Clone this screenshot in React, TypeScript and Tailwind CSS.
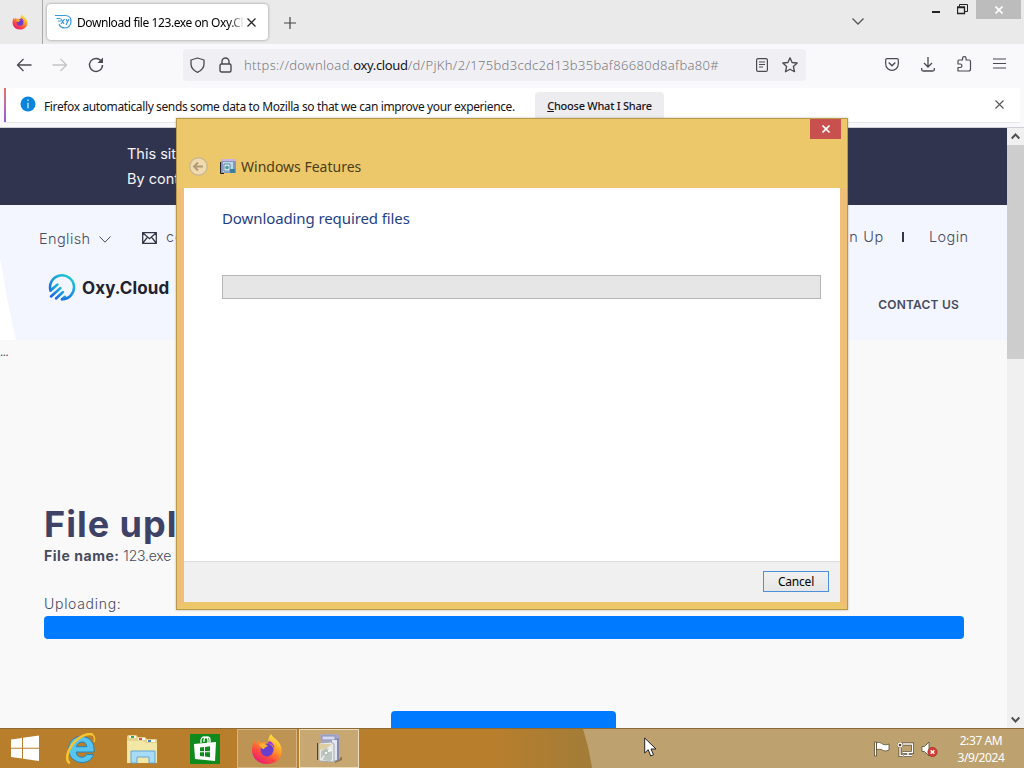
import React from "react";

const FirefoxIcon = ({ size, id }: { size: number; id: string }) => (
  <svg width={size} height={size} viewBox="0 0 32 32" className="shrink-0">
    <defs>
      <linearGradient id={id} x1="0.85" y1="0.05" x2="0.25" y2="1">
        <stop offset="0" stopColor="#fff04a" />
        <stop offset="0.4" stopColor="#ff9a28" />
        <stop offset="0.7" stopColor="#ff4a3f" />
        <stop offset="1" stopColor="#e5197d" />
      </linearGradient>
    </defs>
    <path d="M20 1c1 3 6 5 9 10 4 8 1 20-13 20C6 31 1 24 1 17c0-5 2-8 3-10l1 4 3-4 1 3c3-1 6-1 8 0 0-4 1-7 3-9z" fill={`url(#${id})`} />
    <circle cx="16" cy="17" r="6.5" fill="#6a3fd0" />
    <path d="M8 11c4-1 7 0 9 2-2 1-3 1-4 3-2 0-3-1-5-5z" fill="#ffb02e" />
    <path d="M16 11c4-1 7 2 7 6 1-4-1-8-5-9z" fill="#8f3ce0" />
  </svg>
);

const TabBar = () => (
  <div className="flex h-11 shrink-0 bg-[#eaeaea]">
    <div className="flex w-[43px] items-center justify-center border-r border-[#a9a9a9] pr-[3px]">
      <FirefoxIcon size={16} id="ffSmall" />
    </div>
    <div className="mt-[4px] ml-[4px] flex h-9 w-[221px] items-center rounded bg-white pl-2 shadow-[0_0_3px_rgba(0,0,0,0.4)]">
      <svg width="17" height="16" viewBox="0 0 17 16" fill="none" stroke="#3a9bdc" strokeWidth="1.2" className="shrink-0">
        <path d="M0 1.500h10c4 0 6 2.500 6 6 0 4-3 6.500-6 6.500-3 0-5-1-6-4M1.500 4.500h4M3 7h3" />
        <path d="M6 5l3 5M9.500 5L6 10M11 5l1.500 3M14 5l-3 6" />
      </svg>
      <div className="ml-[5px] w-[166px] shrink-0 overflow-hidden whitespace-nowrap bg-gradient-to-r from-black from-[90%] to-gray-200 bg-clip-text pt-[2px] font-['Noto_Sans',sans-serif] text-[12px] tracking-[-0.42px] text-transparent">
        Download file 123.exe on Oxy.Cl
      </div>
      <svg width="9" height="9" viewBox="0 0 9 9" stroke="#222" strokeWidth="1.200" className="ml-[4px] shrink-0">
        <path d="M.5.5l8 8M8.500.5l-8 8" />
      </svg>
    </div>
    <svg width="12" height="12" viewBox="0 0 12 12" stroke="#444" strokeWidth="1.200" className="mt-[17px] ml-[16px]">
      <path d="M6 0v12M0 6h12" />
    </svg>
    <svg width="12" height="7" viewBox="0 0 12 7" fill="none" stroke="#555" strokeWidth="1.300" className="mt-[18px] ml-[556px]">
      <path d="M.5.500L6 6l5.500-5.500" />
    </svg>
    <div className="ml-auto flex">
      <div className="mt-[11px] mr-[17px] h-[2px] w-2 bg-[#222]" />
      <svg width="11" height="11" viewBox="0 0 11 11" fill="none" stroke="#222" className="mt-1 mr-[8px]">
        <path d="M.5 3h7v6.500h-7zM0 3.500h8" strokeWidth="1.300" />
        <path d="M2.500 2.500v-2h8v7H8" />
      </svg>
      <div className="mr-[3px] flex h-[19px] w-[45px] items-center justify-center bg-[#bcbcbc]">
        <svg width="8" height="8" viewBox="0 0 8 8" stroke="#fff" strokeWidth="1.600">
          <path d="M.5.500l7 7M7.500.500l-7 7" />
        </svg>
      </div>
    </div>
  </div>
);

const Toolbar = () => (
  <div className="flex h-[44px] shrink-0 items-start bg-[#f9f9fb] pt-[5px]">
    <div className="flex h-8 w-[183px] items-center pl-4">
      <svg width="16" height="14" viewBox="0 0 16 14" fill="none" stroke="#4a4a50" strokeWidth="1.300">
        <path d="M15.500 7H1.500M7.500 1l-6 6 6 6" />
      </svg>
      <svg width="16" height="14" viewBox="0 0 16 14" fill="none" stroke="#c3c3c8" strokeWidth="1.300" className="ml-5">
        <path d="M.5 7h14M8.500 1l6 6-6 6" />
      </svg>
      <svg width="16" height="16" viewBox="0 0 16 16" fill="none" stroke="#4a4a50" strokeWidth="1.400" className="ml-5">
        <path d="M13.500 4.500A6.500 6.500 0 1 0 14.500 8" />
        <path d="M15 .5v5.500H9.500z" fill="#4a4a50" stroke="none" />
      </svg>
    </div>
    <div className="flex h-8 w-[623px] items-center rounded bg-[#f0f0f4] pl-[7px]">
      <svg width="15" height="16" viewBox="0 0 15 16" fill="none" stroke="#4a4a50" strokeWidth="1.300">
        <path d="M7.500 1L14 3v4c0 3.500-2.500 6.500-6.500 8.300C3.500 13.500 1 10.500 1 7V3z" strokeLinejoin="round" />
      </svg>
      <svg width="13" height="16" viewBox="0 0 13 16" fill="none" stroke="#4a4a50" strokeWidth="1.400" className="ml-[14px]">
        <rect x="1" y="7" width="11" height="8" rx="1.500" />
        <path d="M3 7V4.500a3.500 3.500 0 0 1 7 0V7" />
      </svg>
      <div className="ml-3 w-[500px] pt-px whitespace-nowrap font-['Noto_Sans',sans-serif] text-[13px] font-light tracking-[0.320px] text-[#7a7a82]">
        https://download.<span className="font-normal tracking-[-0.350px] text-[#15141a]">oxy.cloud</span>/d/PjKh/2/175bd3cdc2d13b35baf86680d8afba80#
      </div>
      <svg width="12" height="14" viewBox="0 0 12 14" fill="none" stroke="#4a4a50" strokeWidth="1.200" className="ml-[12px]">
        <rect x=".6" y=".6" width="10.800" height="12.800" rx="1.500" />
        <path d="M3 4h6M3 6.500h6M3 9h4" />
      </svg>
      <svg width="16" height="16" viewBox="0 0 16 16" fill="none" stroke="#4a4a50" strokeWidth="1.300" strokeLinejoin="round" className="ml-[14px]">
        <path d="M8 .8l2.100 4.700 5.100.5-3.800 3.500 1.100 5.200L8 12.200l-4.500 2.500 1.100-5.200L.8 6l5.100-.5z" />
      </svg>
    </div>
    <div className="ml-auto flex h-8 items-center pr-[18px]">
      <svg width="14" height="13" viewBox="0 0 14 13" fill="none" stroke="#4a4a50" strokeWidth="1.200" className="mb-[2px]">
        <path d="M2 .7h10q1.300 0 1.300 1.300v4a6.300 6.300 0 0 1-12.600 0V2Q.7.700 2 .7z" />
        <path d="M3.700 4.500L7 7.700l3.300-3.200" strokeWidth="1.400" />
      </svg>
      <svg width="14" height="15" viewBox="0 0 14 15" fill="none" stroke="#4a4a50" strokeWidth="1.300" className="mb-[2px] ml-[22px]">
        <path d="M7 0v10M3 6l4 4 4-4M.7 11v1.500q0 1.500 1.500 1.500h9.600q1.500 0 1.500-1.500V11" />
      </svg>
      <svg width="15" height="16" viewBox="0 0 15 16" fill="none" stroke="#4a4a50" strokeWidth="1.200" strokeLinejoin="round" className="mb-[2px] ml-[22px]">
        <path d="M1 7V5q0-1 1-1h3.500V2.500a1.800 1.800 0 0 1 3.600 0V4h2.900q1.500 0 1.500 1.500V13q0 2-2 2H1v-3.500h2.200a1.700 1.700 0 0 0 0-3.500H1z" />
      </svg>
      <svg width="13" height="11" viewBox="0 0 13 11" stroke="#4a4a50" strokeWidth="1.200" className="mb-[3px] ml-[21px]">
        <path d="M0 1h13M0 5.500h13M0 10h13" />
      </svg>
    </div>
  </div>
);

const Notice = () => (
  <div className="flex h-[40px] shrink-0 flex-col border-b border-[#cfcfd6] bg-[#f9f9fb] px-1">
    <div className="flex h-[35px] items-center border-b border-[#e6e6ea] bg-white">
      <div className="h-full w-[2px] bg-gradient-to-b from-[#e9705f] to-[#9059e0]" />
      <svg width="16" height="16" viewBox="0 0 16 16" className="mb-[3px] ml-[14px]">
        <circle cx="8" cy="8" r="7.500" fill="#0a84dc" />
        <path d="M8 3.500v1.600M8 6.800v5.400" stroke="#d9efff" strokeWidth="1.300" />
      </svg>
      <div className="mt-1 ml-[8px] w-[491px] whitespace-nowrap font-['Noto_Sans',sans-serif] text-[12px] tracking-[-0.380px] text-[#15141a]">
        Firefox automatically sends some data to Mozilla so that we can improve your experience.
      </div>
      <div className="mt-[4px] flex h-[27px] w-[129px] justify-center self-start whitespace-nowrap rounded-t bg-[#ededf0] pt-[5px] font-['Noto_Sans',sans-serif] text-[11px] leading-[18px] font-medium tracking-[-0.240px] text-[#15141a]">
        <span><span className="underline">C</span>hoose What I Share</span>
      </div>
      <svg width="9" height="9" viewBox="0 0 9 9" stroke="#555" strokeWidth="1.100" className="mr-4 mb-[2px] ml-auto">
        <path d="M.5.500l8 8M8.500.500l-8 8" />
      </svg>
    </div>
  </div>
);

const OxyLogo = () => (
  <svg width="28" height="28" viewBox="0 0 28 28" fill="none" className="shrink-0">
    <defs>
      <linearGradient id="oxy" x1="0.9" y1="0" x2="0.2" y2="1">
        <stop offset="0" stopColor="#1fd0cf" />
        <stop offset="1" stopColor="#155bea" />
      </linearGradient>
    </defs>
    <g stroke="url(#oxy)" strokeWidth="2.500" strokeLinecap="round">
      <path d="M2.500 17.500A12 12 0 1 1 14 26.200" />
      <path d="M2.500 17.500L9.500 11.500M3 23.500L12.500 15M8 25.500l7-6.500M14 26.200l3-2.500" />
    </g>
  </svg>
);

const Page = () => (
  <div className="flex min-h-0 flex-1">
    <div className="flex w-[1007px] flex-col overflow-hidden bg-[#f9f9f9] font-['Inter',sans-serif] text-[#474b60]">
      <div className="h-[77px] shrink-0 bg-[#31344f] pt-[13px] pl-[127px] text-[14.500px] leading-[25px] whitespace-nowrap text-[#f5f5f8]">
        <p>This site</p>
        <p>By cont</p>
      </div>
      <div className="relative h-[135px] shrink-0 bg-[#f4f6ff]">
        <svg width="16" height="81" viewBox="0 0 16 81" className="absolute top-[54px] left-0">
          <path d="M0 0C4 15 5 30 8 44l8 37H0z" fill="#fff" />
        </svg>
        <div className="flex h-[62px] items-center pt-[6px] pl-[39px] text-[14.500px] font-light whitespace-nowrap">
          <span className="w-[52px] tracking-[0.400px]">English</span>
          <svg width="12" height="7" viewBox="0 0 12 7" fill="none" stroke="#474b60" className="ml-2">
            <path d="M.5.500L6 6.200 11.500.500" />
          </svg>
          <svg width="15" height="12" viewBox="0 0 15 12" fill="none" stroke="#333648" strokeWidth="1.300" className="mb-[3px] ml-[31px]">
            <path d="M.7.700h13.600v10.600H.7zM.7.700l6.800 6 6.800-6M.7 11.300L5.500 5M14.300 11.300L9.500 5" />
          </svg>
          <span className="mb-1 ml-[9px] tracking-[1px]">co</span>
          <span className="mb-1 ml-auto tracking-[0.700px]">Sign Up</span>
          <span className="mb-1 ml-[18px] h-[10px] w-[2px] bg-[#333648]" />
          <span className="mb-1 ml-[25px] w-[78px] tracking-[0.400px]">Login</span>
        </div>
        <div className="flex items-start pt-[6px] pl-[48px]">
          <OxyLogo />
          <span className="ml-[6px] pt-px text-[17px] leading-7 font-bold tracking-[0.100px] text-[#20222f]">Oxy.Cloud</span>
          <span className="mt-[24px] mr-[48px] ml-auto text-[12px] leading-4 font-semibold tracking-[0.200px]">CONTACT US</span>
        </div>
      </div>
      <div className="h-[162px] shrink-0 pt-1 text-[11px] leading-4 tracking-[-0.400px]">...</div>
      <div className="flex flex-col pl-[44px]">
        <h1 className="h-[44px] text-[36px] leading-[44px] font-bold tracking-[1px] whitespace-nowrap text-[#3d4266]">File upl</h1>
        <p className="text-[14px] leading-[20px] font-light tracking-[-0.200px]"><b className="font-bold tracking-[0.550px]">File name:</b> 123.exe</p>
        <p className="mt-7 text-[14px] leading-5 font-light tracking-[0.700px]">Uploading:</p>
        <div className="mt-[2px] h-[23px] w-[920px] rounded bg-[#007bff]" />
        <div className="mt-[72px] ml-[347px] h-10 w-[225px] rounded bg-[#007bff]" />
      </div>
    </div>
    <div className="flex w-[17px] flex-col items-center bg-[#f0f0f0]">
      <svg width="9" height="17" viewBox="0 0 9 17" fill="none" stroke="#505050" strokeWidth="2">
        <path d="M.7 10.500l3.800-4 3.800 4" />
      </svg>
      <div className="h-[214px] w-full bg-[#cdcdcd]" />
      <svg width="9" height="17" viewBox="0 0 9 17" fill="none" stroke="#505050" strokeWidth="2" className="mt-auto">
        <path d="M.7 6.500l3.800 4 3.800-4" />
      </svg>
    </div>
  </div>
);

const Dialog = () => (
  <div className="absolute top-[118px] left-[176px] flex h-[492px] w-[672px] flex-col border border-[#b99a4c] bg-[#ecc86a] font-['Noto_Sans',sans-serif] shadow-[0_0_2px_rgba(90,80,30,0.4)]">
    <div className="flex h-[20px] justify-end pr-[6px]">
      <div className="flex h-5 w-[31px] items-center justify-center bg-[#c8504e]">
        <svg width="8" height="8" viewBox="0 0 8 8" stroke="#fff" strokeWidth="1.600">
          <path d="M.5.500l7 7M7.500.500l-7 7" />
        </svg>
      </div>
    </div>
    <div className="flex h-[49px] items-center pt-[5px] pl-[12px]">
      <svg width="19" height="19" viewBox="0 0 19 19" fill="none">
        <circle cx="9.500" cy="9.500" r="8.700" fill="#f1dbae" stroke="#c9b891" strokeWidth="1.400" />
        <path d="M14 9.500H5.500M9 5.500l-4 4 4 4" stroke="#b09b78" strokeWidth="2" />
      </svg>
      <svg width="16" height="16" viewBox="0 0 16 16" className="ml-[12px]">
        <path d="M1 1h15v14H1z" fill="#8794c4" />
        <path d="M1 1h15v2H1z" fill="#c9b3e0" />
        <path d="M3 4h10v10H3z" fill="#b9dce4" />
        <path d="M4 6h6v7H4z" fill="#eef4f7" stroke="#5f84a5" />
        <circle cx="7" cy="9.500" r="2" fill="#4ea7a5" />
        <path d="M10 11h5v4h-5z" fill="#3e7ca0" />
        <path d="M.5 4v11.500H4" stroke="#222" fill="none" />
      </svg>
      <span className="ml-[5px] text-[14px] text-[#4c3c1b]">Windows Features</span>
    </div>
    <div className="flex flex-1 flex-col border-x-[7px] border-b-[7px] border-x-[#efbf78] border-b-[#ecc86a] bg-white">
      <div className="mt-[20px] ml-[38px] text-[15px] leading-5 tracking-[-0.100px] text-[#1f3f86]">Downloading required files</div>
      <div className="mt-[47px] ml-[38px] h-6 w-[599px] border border-[#b5b5b5] bg-[#e6e6e6]" />
      <div className="mt-auto flex h-[41px] items-start justify-end border-t border-[#dcdcdc] bg-[#f0f0f0] pt-[9px] pr-[11px]">
        <button className="h-[21px] w-[66px] border border-[#4a90dc] bg-gradient-to-b from-[#f1f1f1] to-[#e6e6e6] text-[12px] leading-[19px] tracking-[-0.200px] text-black">
          Cancel
        </button>
      </div>
    </div>
  </div>
);

const Taskbar = () => (
  <div className="relative flex h-10 shrink-0 items-center border-t border-[#8b6a35] bg-[#b87e2c]">
    <svg width="441" height="39" viewBox="0 0 441 39" className="absolute right-0 bottom-0 z-10">
      <path d="M0 0h441v39H9Q6 18 0 0z" fill="#bda270" />
    </svg>
    <div className="absolute top-0 left-[490px] h-full w-[104px] bg-gradient-to-r from-[#b87e2c] to-[#a27c38]" />
    <div className="relative z-20 flex h-full w-full items-center">
      <svg width="28" height="27" viewBox="0 0 28 27" fill="#fff" className="ml-[11px]">
        <path d="M0 4.500L11 3v9.700H0zM12 2.800L28 .500v12.200H12zM0 13.700h11v9.800L0 22zM12 13.700h16V26l-16-2.300z" />
      </svg>
      <svg width="32" height="32" viewBox="0 0 32 32" className="ml-[26px]" fill="none">
        <path d="M16 3.500C8 3.500 3.500 10 3.500 16.500S9 29.500 17 29.500c6 0 10-3 11.500-8h-7c-1 2-2.500 2.700-4.500 2.700-3.500 0-5.700-2-5.800-5.200H29c1-9-4-15.500-13-15.500zm-4.600 10.200C12 11 14 9 17 9s4.600 2 4.800 4.700z" fill="#58c5ee" stroke="#2384b5" />
        <path d="M28 2c-5-3-15 2-21 10S1 29 5 30" stroke="#f7c32e" strokeWidth="2.500" />
        <path d="M28 2c2 2 2 4 1 7" stroke="#f7c32e" strokeWidth="1.500" />
      </svg>
      <svg width="32" height="30" viewBox="0 0 32 30" className="ml-[29px]">
        <path d="M1 3q0-2 2-2h7l2 2h7l2 2h9q1 0 1 1v22H1z" fill="#e4d28d" />
        <path d="M3 2h7v2H3zM12 4h7v2h-7zM21 6h8v2h-8z" fill="#fbfaf0" />
        <path d="M5 2h3v2H5z" fill="#35a65a" />
        <path d="M13 4h3v2h-3z" fill="#d34c48" />
        <path d="M22 6h3v2h-3z" fill="#417fc0" />
        <path d="M1 7h16l3 2h11v20H1z" fill="#f3e7a6" />
        <path d="M5 29V17h24v12h-6v-6H11v6z" fill="#a8dbf5" stroke="#62a6d7" />
      </svg>
      <div className="ml-[32px] flex h-[30px] w-[30px] items-center justify-center bg-[#108a1c]">
        <svg width="24" height="26" viewBox="0 0 24 26">
          <path d="M8 7V5a3 3 0 0 1 7-1v3M11 6V4a3 3 0 0 1 6 0v3" fill="none" stroke="#fff" strokeWidth="1.300" />
          <path d="M1 8l22-2-1 19-20-2z" fill="#fff" />
          <path d="M7 11.500l4-.5v4.300H7zM12 11l5-.7v5h-5zM7 16.200h4v4.300l-4-.5zM12 16.200h5v5l-5-.6z" fill="#108a1c" />
        </svg>
      </div>
      <div className="ml-[17px] flex h-[39px] w-[60px] items-center justify-center border border-[#d4b582] bg-[#bd9453]">
        <FirefoxIcon size={32} id="ffLarge" />
      </div>
      <div className="ml-[2px] flex h-[39px] w-[60px] items-center justify-center border border-[#eddcbb] bg-[#c7a772]">
        <svg width="28" height="31" viewBox="0 0 28 31">
          <path d="M20 30l7-3v-3l-7 2z" fill="#8c7447" />
          <path d="M5 2l3-1h14l3 2v23l-6 3H9z" fill="#a7a8c6" />
          <path d="M7 3h13v4H7z" fill="#d8d9ee" stroke="#9194b8" />
          <path d="M20 6l4-1v22l-4 2z" fill="#868aac" />
          <path d="M17 7h5v20l-5 1z" fill="#e4e6f2" />
          <path d="M4 10l12-1 3 2v18l-15-1z" fill="#e7e9e8" stroke="#a5a9ad" />
          <path d="M5 11h12l-5 4-7 2z" fill="#dccda2" />
          <path d="M6 18l5-3 6 3v8l-3 3-4-2-4 1z" fill="#bcc6be" />
          <path d="M11 20l4-5 2 3zM11 20l-5 6 1 2z" fill="#f6f7f5" />
          <circle cx="11" cy="20" r="2" fill="#f6f7f5" stroke="#8a968f" strokeWidth=".7" />
          <path d="M2.500 10v17" stroke="#40434d" />
        </svg>
      </div>
      <div className="ml-auto flex items-center">
        <svg width="16" height="16" viewBox="0 0 16 16" fill="#fff" stroke="#594a31" strokeWidth=".8">
          <path d="M.5 1h2v14h-2zM2.500 2C5 .5 7 2 8.500 3s4 1 6.500 0v6c-3 1.500-5 1-6.500 0s-4-1-6 0z" />
        </svg>
        <svg width="17" height="16" viewBox="0 0 17 16" fill="none" className="ml-[7px]">
          <path d="M4 3h11.500v8.500H5.500M7 14.500h8M11 12v2.500M3 7v7.500h3" stroke="#594a31" strokeWidth="3" />
          <circle cx="3" cy="4" r="2.500" fill="#594a31" stroke="#594a31" />
          <path d="M6 3h9.500v8.500H5.500M7 14.500h8M11 12v2.500M3 7v7.500h3" stroke="#fff" strokeWidth="1.400" />
          <circle cx="3" cy="4" r="2" stroke="#fff" strokeWidth="1.300" />
        </svg>
        <svg width="17" height="16" viewBox="0 0 17 16" className="ml-[7px]">
          <path d="M1 5.500h2.500L8 1v14l-4.500-4.500H1z" fill="#fff" stroke="#594a31" strokeWidth=".8" />
          <circle cx="11.500" cy="11" r="4.700" fill="#d63b34" stroke="#943027" strokeWidth=".6" />
          <path d="M9.700 9.200l3.600 3.600M13.300 9.200l-3.600 3.600" stroke="#fff" strokeWidth="1.500" />
        </svg>
        <div className="mr-[19px] ml-[19px] w-[48px] text-center font-['Noto_Sans',sans-serif] text-[12px] leading-[17px] tracking-[-0.400px] whitespace-nowrap text-white">
          <p>2:37 AM</p>
          <p>3/9/2024</p>
        </div>
      </div>
    </div>
    <svg width="13" height="20" viewBox="0 0 13 20" className="absolute top-[8px] left-[644px] z-20">
      <path d="M.7 1v15l3.500-3.300L6.700 19l2.800-1.200L7 12h5z" fill="#fff" stroke="#222" />
    </svg>
  </div>
);

const App = () => {
  return (
    <div className="relative flex h-[768px] w-[1024px] flex-col overflow-hidden bg-white">
      <TabBar />
      <Toolbar />
      <Notice />
      <Page />
      <Taskbar />
      <Dialog />
    </div>
  );
};

export default App;
